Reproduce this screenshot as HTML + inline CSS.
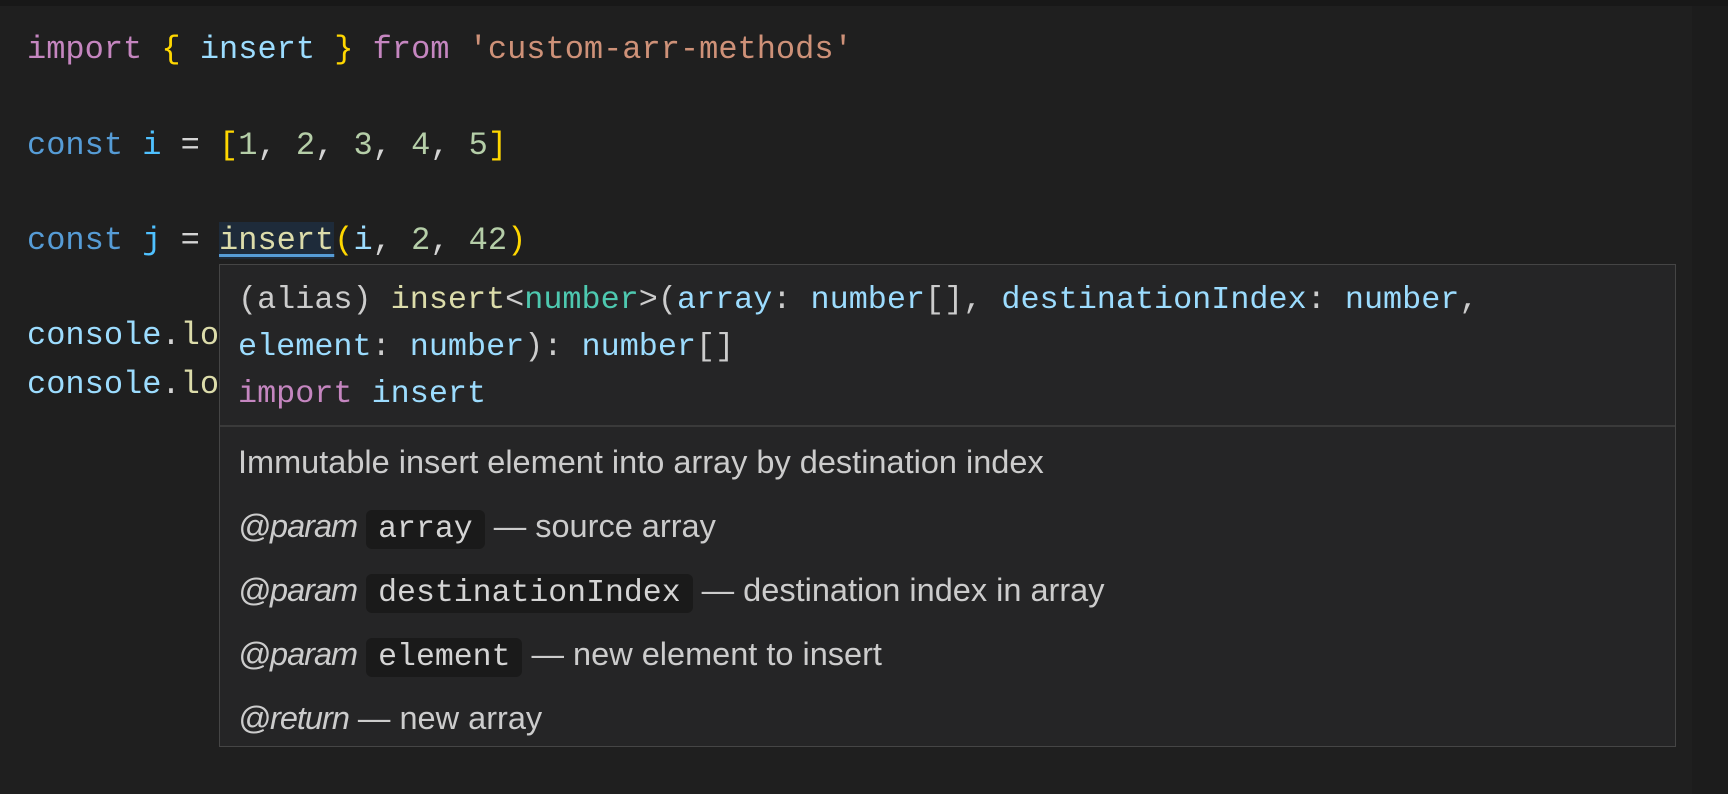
<!DOCTYPE html>
<html><head><meta charset="utf-8"><style>
html,body{margin:0;padding:0;}
body{width:1728px;height:794px;background:#1f1f1f;position:relative;overflow:hidden;font-family:"Liberation Mono",monospace;}
.top{position:absolute;left:0;top:0;width:1728px;height:6px;background:#181818;}
.strip{position:absolute;left:1692px;top:6px;width:36px;height:788px;background:#1c1c1c;}
.ln{position:absolute;left:27px;font-size:32px;line-height:48px;white-space:pre;height:48px;}
.kw{color:#c586c0}.br{color:#ffd700}.id{color:#9cdcfe}.st{color:#ce9178}.co{color:#569cd6}.v{color:#4fc1ff}.nu{color:#b5cea8}.op{color:#d4d4d4}.fn{color:#dcdcaa}.ty{color:#4ec9b0}.pl{color:#cccccc}
.hl{background:#1e2b3a;text-decoration:underline;text-decoration-color:#569cd6;text-decoration-thickness:3px;text-underline-offset:5px;}
.tip{position:absolute;left:219px;top:264px;width:1455px;height:481px;background:#252526;border:1.5px solid #454545;}
.sig{position:absolute;left:18px;font-size:31.8px;line-height:47px;white-space:pre;}
.sep{position:absolute;left:0;top:160px;width:100%;height:2px;background:#3a3a3a;}
.doc{position:absolute;left:18px;font-family:"Liberation Sans",sans-serif;font-size:32.5px;color:#cccccc;white-space:pre;line-height:40px;}
.doc i{font-style:italic;letter-spacing:-1px;}
.chip{font-family:"Liberation Mono",monospace;font-size:31.5px;background:#1a1a1a;border-radius:6px;padding:2px 12px;color:#d4d4d4;}
</style></head><body>
<div class="top"></div>
<div class="strip"></div>
<div class="ln" style="top:26px"><span class="kw">import</span> <span class="br">{</span> <span class="id">insert</span> <span class="br">}</span> <span class="kw">from</span> <span class="st">'custom-arr-methods'</span></div>
<div class="ln" style="top:122px"><span class="co">const</span> <span class="v">i</span> <span class="op">=</span> <span class="br">[</span><span class="nu">1</span><span class="op">,</span> <span class="nu">2</span><span class="op">,</span> <span class="nu">3</span><span class="op">,</span> <span class="nu">4</span><span class="op">,</span> <span class="nu">5</span><span class="br">]</span></div>
<div class="ln" style="top:217px"><span class="co">const</span> <span class="v">j</span> <span class="op">=</span> <span class="fn hl">insert</span><span class="br">(</span><span class="id">i</span><span class="op">,</span> <span class="nu">2</span><span class="op">,</span> <span class="nu">42</span><span class="br">)</span></div>
<div class="ln" style="top:312px"><span class="id">console</span><span class="op">.</span><span class="fn">lo</span></div>
<div class="ln" style="top:361px"><span class="id">console</span><span class="op">.</span><span class="fn">lo</span></div>
<div class="tip">
<div class="sig" style="top:12px"><span class="pl">(alias)</span> <span class="fn">insert</span><span class="pl">&lt;</span><span class="ty">number</span><span class="pl">&gt;(</span><span class="id">array</span><span class="pl">:</span> <span class="id">number</span><span class="pl">[],</span> <span class="id">destinationIndex</span><span class="pl">:</span> <span class="id">number</span><span class="pl">,</span></div>
<div class="sig" style="top:59px"><span class="id">element</span><span class="pl">:</span> <span class="id">number</span><span class="pl">):</span> <span class="id">number</span><span class="pl">[]</span></div>
<div class="sig" style="top:106px"><span class="kw">import</span> <span class="id">insert</span></div>
<div class="sep"></div>
<div class="doc" style="top:177px">Immutable insert element into array by destination index</div>
<div class="doc" style="top:241px"><i>@param</i> <span class="chip">array</span> — source array</div>
<div class="doc" style="top:305px"><i>@param</i> <span class="chip">destinationIndex</span> — destination index in array</div>
<div class="doc" style="top:369px"><i>@param</i> <span class="chip">element</span> — new element to insert</div>
<div class="doc" style="top:433px"><i>@return</i> — new array</div>
</div>
</body></html>
